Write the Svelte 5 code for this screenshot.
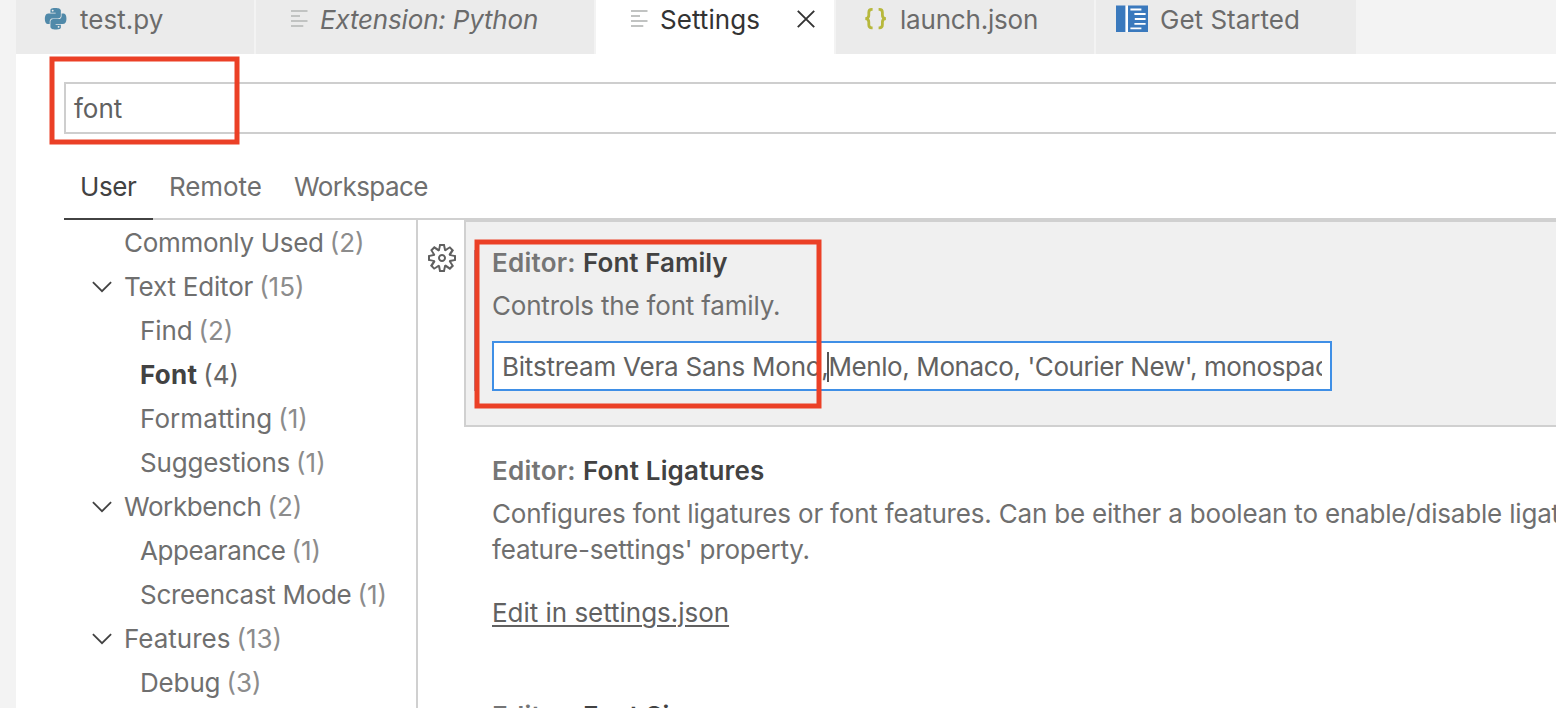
<script>
  const tabs = [
    { icon: 'python', label: 'test.py', width: 240, ls: 0.04 },
    { icon: 'lines', label: 'Extension: Python', width: 340, ls: -0.18, italic: true },
    { icon: 'lines', label: 'Settings', width: 240, ls: 0.05, active: true },
    { icon: 'braces', label: 'launch.json', width: 260, ls: -0.2 },
    { icon: 'guide', label: 'Get Started', width: 260, ls: 0 }
  ];

  const scopes = [
    { label: 'User', active: true, width: 89, ls: -0.4 },
    { label: 'Remote', width: 125, ls: -0.1 },
    { label: 'Workspace', width: 160, ls: -0.55 }
  ];

  const toc = [
    { label: 'Commonly Used', count: 2, ls: -0.3 },
    { label: 'Text Editor', count: 15, open: true, ls: -0.2 },
    { label: 'Find', count: 2, child: true, ls: -0.1 },
    { label: 'Font', count: 4, child: true, selected: true, ls: 0.25 },
    { label: 'Formatting', count: 1, child: true, ls: 0.08 },
    { label: 'Suggestions', count: 1, child: true, ls: -0.2 },
    { label: 'Workbench', count: 2, open: true, ls: -0.4 },
    { label: 'Appearance', count: 1, child: true, ls: -0.4 },
    { label: 'Screencast Mode', count: 1, child: true, ls: -0.3 },
    { label: 'Features', count: 13, open: true, ls: 0 },
    { label: 'Debug', count: 3, child: true, ls: -0.15 }
  ];
</script>

{#snippet title(name, ls)}
  <h2><span class="cat">Editor:</span><span class="name" style:letter-spacing="{ls}px">{name}</span></h2>
{/snippet}

<div class="window">
  <div class="edge"></div>
  <main>
    <nav class="tabs">
      {#each tabs as t}
        <div class="tab" class:active={t.active} style:width="{t.width}px">
          <svg class="ticon" viewBox="0 0 32 40" width="32" height="40">
            {#if t.icon === 'python'}
              <path fill="#5089a9" transform="translate(8.9 8) scale(.895)" d="M14.25.18l.9.2.73.26.59.3.45.32.34.34.25.34.16.33.1.3.04.26.02.2-.01.13V8.5l-.05.63-.13.55-.21.46-.26.38-.3.31-.33.25-.35.19-.35.14-.33.1-.3.07-.26.04-.21.02H8.77l-.69.05-.59.14-.5.22-.41.27-.33.32-.27.35-.2.36-.15.37-.1.35-.07.32-.04.27-.02.21v3.06H3.17l-.21-.03-.28-.07-.32-.12-.35-.18-.36-.26-.36-.36-.35-.46-.32-.59-.28-.73-.21-.88-.14-1.05-.05-1.23.06-1.22.16-1.04.24-.87.32-.71.36-.57.4-.44.42-.33.42-.24.4-.16.36-.1.32-.05.24-.01h.16l.06.01h8.16v-.83H6.18l-.01-2.75-.02-.37.05-.34.11-.31.17-.28.25-.26.31-.23.38-.2.44-.18.51-.15.58-.12.64-.1.71-.06.77-.04.84-.02 1.27.05zm-6.3 1.98l-.23.33-.08.41.08.41.23.34.33.22.41.09.41-.09.33-.22.23-.34.08-.41-.08-.41-.23-.33-.33-.22-.41-.09-.41.09zm13.09 3.95l.28.06.32.12.35.18.36.27.36.35.35.47.32.59.28.73.21.88.14 1.04.05 1.23-.06 1.23-.16 1.04-.24.86-.32.71-.36.57-.4.45-.42.33-.42.24-.4.16-.36.09-.32.05-.24.02-.16-.01h-8.22v.82h5.84l.01 2.76.02.36-.05.34-.11.31-.17.29-.25.25-.31.24-.38.2-.44.17-.51.15-.58.13-.64.09-.71.07-.77.04-.84.01-1.27-.04-1.07-.14-.9-.2-.73-.25-.59-.3-.45-.33-.34-.34-.25-.34-.16-.33-.1-.3-.04-.25-.02-.2.01-.13v-5.34l.05-.64.13-.54.21-.46.26-.38.3-.32.33-.24.35-.2.35-.14.33-.1.3-.06.26-.04.21-.02.13-.01h5.84l.69-.05.59-.14.5-.21.41-.28.33-.32.27-.35.2-.36.15-.36.1-.35.07-.32.04-.28.02-.21V6.07h2.09l.14.01zm-6.47 14.25l-.23.33-.08.41.08.41.23.33.33.23.41.08.41-.08.33-.23.23-.33.08-.41-.08-.41-.23-.33-.33-.23-.41-.08-.41.08z" />
            {:else if t.icon === 'lines'}
              <path stroke="#c1c3c2" stroke-width="2" fill="none" d="M15 11h16.5M15 16h9M15 21h16.5M15 26h12.3" />
            {:else if t.icon === 'braces'}
              <path stroke="#b7b83c" stroke-width="2.8" fill="none" d="M16.6 9.4h-.8q-3 0-3 3v2.9q0 3.3-3.5 3.3q3.5 0 3.5 3.3v2.9q0 3 3 3h.8M22.6 9.4h.8q3 0 3 3v2.9q0 3.3 3.5 3.3q-3.5 0-3.5 3.3v2.9q0 3-3 3h-.8" />
            {:else}
              <path fill="#fff" d="M9 6h4v26H9z" />
              <path fill="#3a79bd" d="M0 5.5h9.4v26.6H0zM12 5.5h20v26.6H12z" />
              <path stroke="#fff" stroke-width="1.8" d="M14.4 9.5h11M18.4 14h11.2M18.8 19h10.8M18.4 23.8h11.2M14.4 28.4h11" />
            {/if}
          </svg>
          <span class:italic={t.italic} style:letter-spacing="{t.ls}px">{t.label}</span>
          {#if t.active}
            <svg class="close" viewBox="0 0 18 18" width="18" height="18"><path stroke="#333" stroke-width="1.9" fill="none" d="M.8.8l16.4 16.4M17.2.8L.8 17.2" /></svg>
          {/if}
        </div>
      {/each}
    </nav>

    <section class="body">
      <div class="search"><span>font</span></div>
      <div class="scopes">
        {#each scopes as s}
          <div class="scope" class:active={s.active} style:width="{s.width}px" style:letter-spacing="{s.ls}px">{s.label}</div>
        {/each}
      </div>

      <div class="panes">
        <ul class="toc">
          {#each toc as r}
            <li class:child={r.child} class:selected={r.selected}>
              <span class="twist">
                {#if r.open}
                  <svg viewBox="0 0 20 12" width="20" height="12"><path fill="none" stroke="#424242" stroke-width="1.8" d="M.9 1.2l9.1 9 9.1-9" /></svg>
                {/if}
              </span>
              <span class="lbl" style:letter-spacing="{r.ls}px">{r.label}</span>
              <span class="cnt">({r.count})</span>
            </li>
          {/each}
        </ul>

        <div class="gutter">
          <svg viewBox="0 0 16 16" width="32" height="32"><path fill="#5f5f5f" fill-rule="evenodd" d="M9.1 4.4L8.6 2H7.4l-.5 2.4-.7.3-2-1.3-.9.8 1.3 2-.2.7-2.4.5v1.2l2.4.5.3.8-1.3 2 .8.8 2-1.3.8.3.4 2.3h1.2l.5-2.4.8-.3 2 1.3.8-.8-1.3-2 .3-.8 2.3-.4V7.4l-2.4-.5-.3-.8 1.3-2-.8-.8-2 1.3-.7-.2zM9.4 1l.5 2.4L12 2.1l2 2-1.4 2.1 2.4.4v2.8l-2.4.5L14 12l-2 2-2.1-1.4-.5 2.4H6.6l-.5-2.4L4 13.9l-2-2 1.4-2.1L1 9.4V6.6l2.4-.5L2.1 4l2-2 2.1 1.4.4-2.4h2.8zm.6 7c0 1.1-.9 2-2 2s-2-.9-2-2 .9-2 2-2 2 .9 2 2zM8 9c.6 0 1-.4 1-1s-.4-1-1-1-1 .4-1 1 .4 1 1 1z" /></svg>
        </div>

        <div class="settings">
          <article class="setting focused">
            {@render title('Font Family', 0.05)}
            <p>Controls the font family.</p>
            <div class="field"><div class="clip"><span>Bitstream Vera Sans Mono,</span><i class="caret"></i><span class="rest">Menlo, Monaco, 'Courier New', monospace</span></div></div>
          </article>
          <article class="setting second">
            {@render title('Font Ligatures', 0.17)}
            <p>Configures font ligatures or font features. Can be either a boolean to enable/disable ligatures<br />feature-settings' property.</p>
            <span class="link">Edit in settings.json</span>
          </article>
          <article class="setting third">
            {@render title('Font Size', 0.1)}
          </article>
        </div>
      </div>
    </section>
  </main>
  <svg class="marks" viewBox="0 0 1556 708" width="1556" height="708">
    <path stroke="#9a90ad" stroke-width="1" d="M474.5 250v141" />
    <rect x="52" y="59" width="185" height="83" />
    <rect x="477" y="242" width="342" height="164" />
  </svg>
</div>

<style>
  :global(body) { overflow: hidden; }
  .window {
    position: relative; display: flex; width: 1556px; height: 708px; overflow: hidden;
    background: #fff; color: #6f6f6f; font: 26px/36px Inter, sans-serif; white-space: nowrap;
  }
  .window * { box-sizing: border-box; }
  .edge { flex: 0 0 16px; background: #f3f3f3; }
  main { flex: 1; min-width: 0; display: flex; flex-direction: column; }
  .tabs { display: flex; flex: 0 0 54px; background: #f3f3f3; }
  .tab {
    display: flex; align-items: center; gap: 12px; height: 54px; padding: 0 0 14px 20px;
    background: #ebebeb; border-right: 2px solid #f3f3f3; color: #6b6b6b;
  }
  .tab.active { background: #fff; color: #333; }
  .tab:last-child { border-right: 0; }
  .ticon { flex: none; }
  .italic { font-style: italic; }
  .close { margin: 0 19px 2px auto; }
  .body { display: flex; flex-direction: column; flex: 1; min-height: 0; padding: 28px 0 0 48px; }
  .search {
    flex: 0 0 52px; display: flex; align-items: center; padding: 2px 0 0 8px;
    border: 2px solid #cecece; border-right: 0; color: #616161;
  }
  .scopes { display: flex; flex: 0 0 86px; padding-top: 22px; border-bottom: 2px solid #d0d0d0; }
  .scope { height: 64px; margin-bottom: -2px; padding: 13px 0 0 16px; }
  .scope.active { color: #424242; border-bottom: 2px solid #424242; }
  .panes { display: flex; flex: 1; min-height: 0; }
  .toc {
    flex: 0 0 354px; margin: 0; padding: 1px 0 0 28px; list-style: none;
    border-right: 2px solid #d0d0d0; overflow: hidden;
  }
  li { display: flex; align-items: center; height: 44px; }
  .twist { flex: 0 0 32px; display: flex; }
  .child .twist { flex-basis: 48px; }
  .cnt { margin-left: 6px; color: #8c8c8c; letter-spacing: 0; }
  .selected .lbl { color: #424242; font-weight: 700; }
  .selected .cnt { color: #666; }
  .gutter { flex: 0 0 46px; padding: 22px 0 0 8px; }
  .settings { flex: 1; min-width: 0; overflow: hidden; }
  .setting { padding-left: 28px; }
  .focused { height: 207px; padding: 23px 0 0 26px; background: #f0f0f0; border: 2px solid #d0d0d0; border-right: 0; }
  .second { height: 246px; padding-top: 26px; }
  .third { padding-top: 25px; }
  h2 { display: flex; margin: 0; font-size: 26px; line-height: 36px; font-weight: 600; color: #424242; }
  .cat { width: 91px; color: #757575; letter-spacing: .25px; }
  p { margin: 7px 0 0; letter-spacing: -.19px; }
  .field { width: 840px; height: 50px; margin-top: 17px; padding: 2px 8px 0; background: #fff; border: 2px solid #3f8fe6; color: #616161; }
  .clip { display: flex; align-items: center; height: 44px; overflow: hidden; letter-spacing: -.22px; }
  .rest { letter-spacing: -.4px; }
  .caret { flex: none; width: 2px; height: 30px; margin: 0 -1px; background: #555; }
  .link { display: inline-block; margin-top: 27px; color: #616161; text-decoration: underline; text-decoration-thickness: 2px; text-underline-offset: 3px; letter-spacing: -.03px; }
  .marks { position: absolute; left: 0; top: 0; pointer-events: none; fill: none; }
  .marks rect { stroke: #eb4026; stroke-width: 5px; }
</style>
